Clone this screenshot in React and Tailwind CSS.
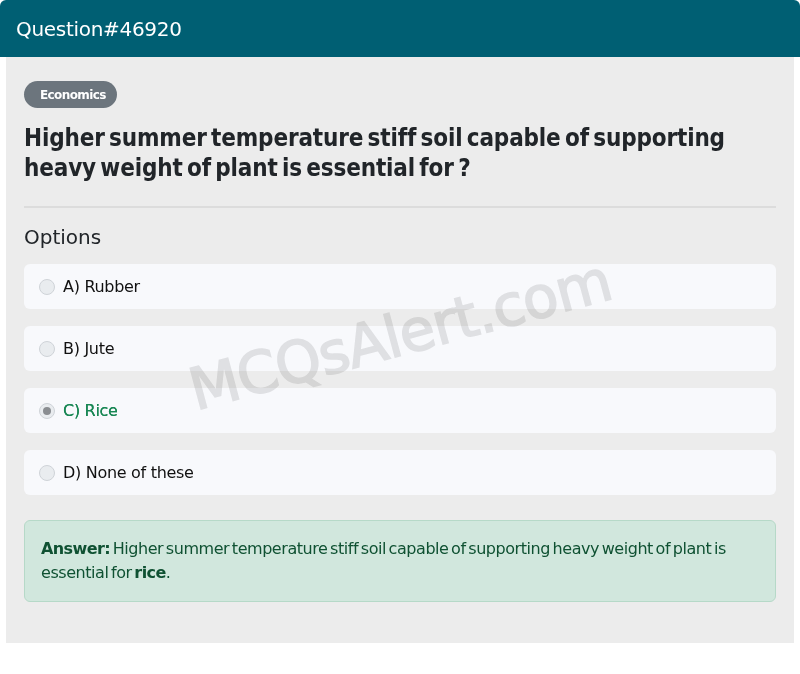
import React from 'react';

const options = [
  { key: 'A', text: 'Rubber' },
  { key: 'B', text: 'Jute' },
  { key: 'C', text: 'Rice', correct: true },
  { key: 'D', text: 'None of these' },
];

function Radio({ checked }) {
  return (
    <span className="relative flex h-[16px] w-[16px] shrink-0 items-center justify-center rounded-full border border-[#cfd3d8] bg-[#e9ecef]">
      {checked && <span className="h-[8px] w-[8px] rounded-full bg-[#8a8d91]" />}
    </span>
  );
}

export default function App() {
  return (
    <div className="min-h-[674px] bg-white font-['DejaVu_Sans',sans-serif] text-[#212529]">
      <div className="flex h-[57px] items-center rounded-t-[6px] bg-[#005f73] px-[16px]">
        <h1 className="text-[20px] tracking-[-0.3px] text-white">Question#46920</h1>
      </div>

      <div className="relative mx-[6px] overflow-hidden bg-[#ececec] px-[18px] pb-[41px] pt-[24px]">
        <span className="inline-flex h-[27px] items-center rounded-full bg-[#6c757d] pl-[16px] pr-[11px] text-[12px] font-bold tracking-[-0.6px] text-white">
          Economics
        </span>

        <h2 className="mt-[15px] font-['DejaVu_Sans_Condensed','DejaVu_Sans',sans-serif] text-[24px] font-bold leading-[30px] tracking-[-0.15px] [word-spacing:-3px] text-[#212529]">
          Higher summer temperature stiff soil capable of supporting heavy weight of plant is essential for ?
        </h2>

        <hr className="mt-[23px] border-t-2 border-[#dcdcdc]" />

        <h3 className="mt-[15px] text-[20px] leading-[28px] text-[#212529]">Options</h3>

        <div className="mt-[13px] flex flex-col gap-[17px]">
          {options.map((o) => (
            <div
              key={o.key}
              className="flex h-[45px] items-center gap-[8px] rounded-[6px] bg-[#f8f9fc] px-[15px]"
            >
              <Radio checked={o.correct} />
              <span
                className={`text-[16px] tracking-[-0.3px] ${
                  o.correct ? 'text-[#198754] [text-shadow:0_0_0.5px_#198754]' : 'text-[#111]'
                }`}
              >
                {o.key}) {o.text}
              </span>
            </div>
          ))}
        </div>

        <div className="mt-[25px] rounded-[6px] border border-[#b6d9c8] bg-[#d1e7dd] px-[16px] py-[16px] text-[16px] leading-[24px] tracking-[-0.45px] [word-spacing:-2px] text-[#0f5132]">
          <b className="tracking-[-0.6px]">Answer:</b> Higher summer temperature stiff soil capable of supporting heavy weight of plant is essential for{' '}
          <b className="tracking-[-0.6px]">rice</b>.
        </div>

        <div className="pointer-events-none absolute left-[174px] top-[243px] w-[440px] -rotate-[15deg] select-none whitespace-nowrap text-center text-[58px] leading-[70px] tracking-[-1px] text-[#e6e6e6] mix-blend-multiply [-webkit-text-stroke:1.5px_#e6e6e6]">
          MCQsAlert.com
        </div>
      </div>
    </div>
  );
}
